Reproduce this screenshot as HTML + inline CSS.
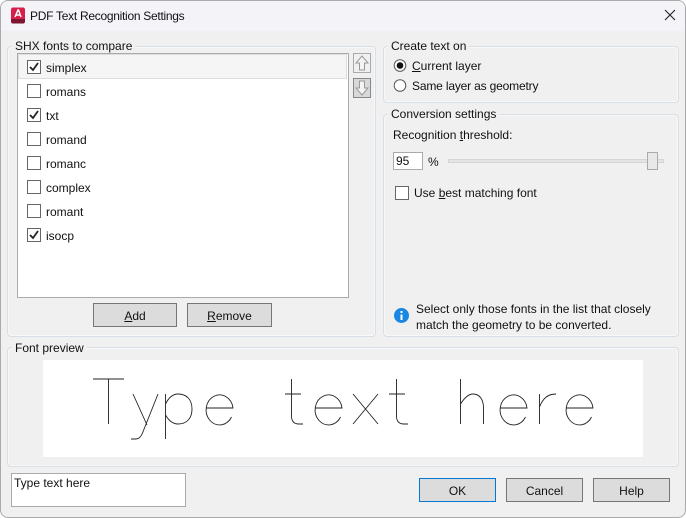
<!DOCTYPE html>
<html><head><meta charset="utf-8"><style>
html,body{margin:0;padding:0;background:#fff}
#w{position:relative;width:684px;height:516px;background:#f0f0f0;border:1px solid #aaa;border-radius:8px;overflow:hidden;font:12px/16px "Liberation Sans",sans-serif;color:#111}
#w>*{position:absolute;box-sizing:border-box}
#o{left:-1px;top:-1px;width:686px;height:518px}
#o>*{position:absolute;box-sizing:border-box}
.t{white-space:nowrap}
.g{border:1px solid #d8dee5;border-radius:4px;box-shadow:inset 0 0 0 1px #f8f8f8}
.l{background:#f0f0f0;padding:0 3px;white-space:nowrap;height:14px;line-height:14px}
.b{background:#dcdcdc;border:1px solid #767676;text-align:center;line-height:24px}
.c{width:14px;height:14px;border:1px solid #666;background:#fff}
.k{width:14px;height:14px}
u{text-underline-offset:1px}
</style></head><body><div id="w"><div id="o">
<div style="left:0;top:0;width:686px;height:31px;background:#f3f3f8"></div>
<svg style="left:10px;top:7px" width="16" height="17" viewBox="0 0 16 17"><path d="M3 0.5H13Q15 .5 15 3V14Q15 16.500 13 16.500H3Q1 16.500 1 14V3Q1 .5 3 .5Z" fill="#d81e4a"/><path d="M1 12H15V14Q15 16.500 13 16.500H3Q1 16.500 1 14Z" fill="#7d1530"/><path d="M5 10L8 3H8.500L11 10M6 8H10" stroke="#fff" stroke-width="1.500" fill="none"/></svg>
<div class="t" style="left:30px;top:8px;letter-spacing:-.28px">PDF Text Recognition Settings</div>
<svg style="left:664px;top:9px" width="12" height="12"><path d="M1 1L11 11M11 1L1 11" stroke="#222" stroke-width="1.100"/></svg>

<div class="g" style="left:7px;top:46px;width:369px;height:291px"></div>
<div class="l" style="left:12px;top:39px">SHX fonts to compare</div>
<div style="left:17px;top:53px;width:332px;height:245px;background:#fff;border:1px solid #aaa"></div>
<div style="left:18px;top:54px;width:329px;height:25px;background:#f5f5f5;border:1px solid #ddd"></div>

<div class="c" style="left:27px;top:60px"></div><svg class="k" style="left:27px;top:60px"><path d="M3 7L6 10L11 3" stroke="#222" stroke-width="1.800" fill="none"/></svg><div class="t" style="left:46px;top:60px">simplex</div>
<div class="c" style="left:27px;top:84px"></div><div class="t" style="left:46px;top:84px">romans</div>
<div class="c" style="left:27px;top:108px"></div><svg class="k" style="left:27px;top:108px"><path d="M3 7L6 10L11 3" stroke="#222" stroke-width="1.800" fill="none"/></svg><div class="t" style="left:46px;top:108px">txt</div>
<div class="c" style="left:27px;top:132px"></div><div class="t" style="left:46px;top:132px">romand</div>
<div class="c" style="left:27px;top:156px"></div><div class="t" style="left:46px;top:156px">romanc</div>
<div class="c" style="left:27px;top:180px"></div><div class="t" style="left:46px;top:180px">complex</div>
<div class="c" style="left:27px;top:204px"></div><div class="t" style="left:46px;top:204px">romant</div>
<div class="c" style="left:27px;top:228px"></div><svg class="k" style="left:27px;top:228px"><path d="M3 7L6 10L11 3" stroke="#222" stroke-width="1.800" fill="none"/></svg><div class="t" style="left:46px;top:228px">isocp</div>

<svg style="left:353px;top:53px" width="18" height="46" viewBox="0 0 18 46"><rect x=".5" y=".5" width="17" height="19" fill="#f0f0f0" stroke="#aaa"/><path d="M9 3L15 10H11.500V17H6.500V10H3Z" fill="#f4f4f4" stroke="#999"/><rect x=".5" y="25.500" width="17" height="19" fill="#d9d9d9" stroke="#888"/><path d="M9 42L15 35H11.500V28H6.500V35H3Z" fill="#f4f4f4" stroke="#999"/></svg>

<div class="b" style="left:93px;top:303px;width:84px;height:24px"><u>A</u>dd</div>
<div class="b" style="left:187px;top:303px;width:85px;height:24px"><u>R</u>emove</div>

<div class="g" style="left:383px;top:46px;width:296px;height:57px"></div>
<div class="l" style="left:388px;top:39px">Create text on</div>
<svg style="left:393px;top:58px" width="14" height="34"><circle cx="7" cy="7.500" r="5.800" fill="#fff" stroke="#555"/><circle cx="7" cy="7.500" r="3.300" fill="#111"/><circle cx="7" cy="27.500" r="5.800" fill="#fff" stroke="#555"/></svg>
<div class="t" style="left:412px;top:58px"><u>C</u>urrent layer</div>
<div class="t" style="left:412px;top:78px;letter-spacing:-.17px">Same layer as <u>g</u>eometry</div>

<div class="g" style="left:383px;top:114px;width:296px;height:223px"></div>
<div class="l" style="left:388px;top:107px">Conversion settings</div>
<div class="t" style="left:393px;top:127px">Recognition <u>t</u>hreshold:</div>
<div style="left:393px;top:152px;width:30px;height:18px;background:#fff;border:1px solid #aaa;padding-left:2px;line-height:16px">95</div>
<div class="t" style="left:428px;top:154px">%</div>
<div style="left:448px;top:159px;width:216px;height:4px;background:#e3e5e3;border:1px solid #d4d6d4"></div>
<div style="left:647px;top:152px;width:11px;height:18px;background:#e8e8e8;border:1px solid #aaa"></div>
<div class="c" style="left:395px;top:186px"></div>
<div class="t" style="left:414px;top:185px">Use <u>b</u>est matching font</div>
<svg style="left:394px;top:308px" width="15" height="15" viewBox="0 0 15 15"><circle cx="7.500" cy="7.500" r="7.500" fill="#1a87e2"/><rect x="6.500" y="6.500" width="2" height="5.500" fill="#fff"/><rect x="6.500" y="3" width="2" height="2" fill="#fff"/></svg>
<div class="t" style="left:416px;top:301px">Select only those fonts in the list that closely</div>
<div class="t" style="left:416px;top:317px">match the geometry to be converted.</div>

<div class="g" style="left:7px;top:347px;width:672px;height:120px"></div>
<div class="l" style="left:12px;top:341px">Font preview</div>
<div style="left:43px;top:360px;width:600px;height:97px;background:#fff"></div>
<svg style="left:0;top:0" width="686" height="518" fill="none" stroke="#222" stroke-width=".9">
<path d="M93 379H124M108.500 379V424"/>
<path d="M133 394L147 425M158 394L142.500 433Q140 439 136 439H131"/>
<path d="M165.500 394V439M165.500 404C169 397 173 394 178 394C187 394 192 400 192 409C192 418 187 424 178 424C173 424 169 421 165.500 415"/>
<path d="M206 408H233A13.500 15 0 1 0 231.500 417"/>
<path d="M291.500 379V416Q291.500 424 299 424H303M285 394H301"/>
<path d="M315 408H342A13.500 15 0 1 0 340.500 417"/>
<path d="M353 394L378 424M378 394L353 424"/>
<path d="M396.500 379V416Q396.500 424 404 424H408M389 394H405"/>
<path d="M460.500 379V424M460.500 404C465 397 469 394 473 394C480 394 483.500 400 483.500 408V424"/>
<path d="M500 408H527A13.500 15 0 1 0 525.500 417"/>
<path d="M539.500 394V424M539.500 407C543 398 548 394 556 394"/>
<path d="M566 408H593A13.500 15 0 1 0 591.500 417"/>
</svg>

<div style="left:11px;top:473px;width:175px;height:34px;background:#fff;border:1px solid #aaa;padding:1px 2px"><span class="t">Type text here</span></div>
<div class="b" style="left:419px;top:478px;width:77px;height:24px;border-color:#0078d4">OK</div>
<div class="b" style="left:506px;top:478px;width:77px;height:24px">Cancel</div>
<div class="b" style="left:593px;top:478px;width:77px;height:24px">Help</div>
</div></div></body></html>
